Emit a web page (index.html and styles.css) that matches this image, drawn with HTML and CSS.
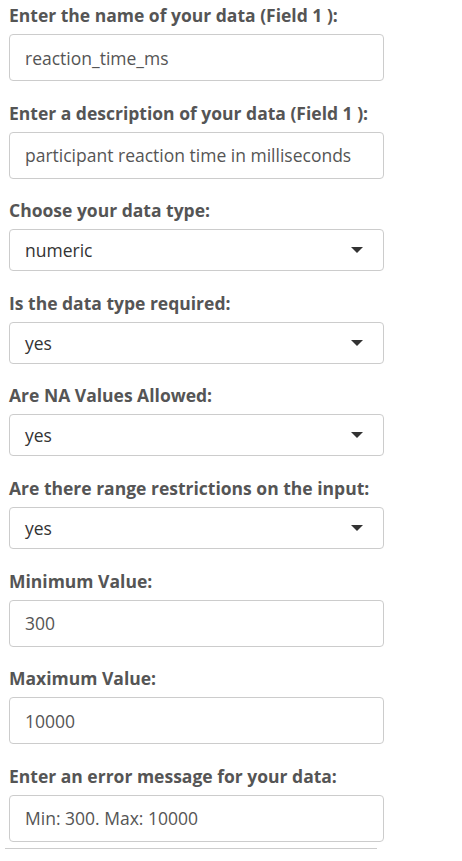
FILE: index.html
```html
<!DOCTYPE html>
<html>
<head>
<meta charset="utf-8">
<link rel="stylesheet" href="styles.css">
</head>
<body>
<div class="form">
  <div class="group text">
    <label class="lbl">Enter the name of your data (Field 1 ):</label>
    <div class="input">reaction_time_ms</div>
  </div>
  <div class="group text">
    <label class="lbl">Enter a description of your data (Field 1 ):</label>
    <div class="input">participant reaction time in milliseconds</div>
  </div>
  <div class="group sel">
    <label class="lbl">Choose your data type:</label>
    <div class="select"><span>numeric</span><span class="caret"></span></div>
  </div>
  <div class="group sel">
    <label class="lbl">Is the data type required:</label>
    <div class="select"><span>yes</span><span class="caret"></span></div>
  </div>
  <div class="group sel">
    <label class="lbl">Are NA Values Allowed:</label>
    <div class="select"><span>yes</span><span class="caret"></span></div>
  </div>
  <div class="group sel">
    <label class="lbl">Are there range restrictions on the input:</label>
    <div class="select"><span>yes</span><span class="caret"></span></div>
  </div>
  <div class="group text">
    <label class="lbl">Minimum Value:</label>
    <div class="input">300</div>
  </div>
  <div class="group text">
    <label class="lbl">Maximum Value:</label>
    <div class="input">10000</div>
  </div>
  <div class="group text last">
    <label class="lbl">Enter an error message for your data:</label>
    <div class="input">Min: 300. Max: 10000</div>
  </div>
  <div class="rule"></div>
</div>
</body>
</html>
```
FILE: styles.css
```css
html, body {
  margin: 0;
  padding: 0;
  background: #fff;
}
body {
  font-family: "Open Sans", "Liberation Sans", sans-serif;
  font-size: 17.5px;
  color: #555;
}
.form {
  padding: 4px 0 0 9px;
  width: 375px;
}
.group {
  display: flex;
  flex-direction: column;
}
.lbl {
  display: block;
  font-weight: 700;
  font-size: 17.5px;
  line-height: 22px;
  color: #555;
  margin-bottom: 8px;
}
.input {
  box-sizing: border-box;
  height: 47px;
  border: 1px solid #ccc;
  border-radius: 4px;
  padding: 0 15px;
  display: flex;
  align-items: center;
  font-size: 17.5px;
  color: #555;
}
.text {
  margin-bottom: 20.6px;
}
.sel {
  margin-bottom: 20.6px;
}
.select {
  box-sizing: border-box;
  height: 42px;
  border: 1px solid #ccc;
  border-radius: 4px;
  padding: 0 15px;
  display: flex;
  align-items: center;
  justify-content: space-between;
  font-size: 17.5px;
  color: #333;
}
.caret {
  width: 0;
  height: 0;
  border-left: 6px solid transparent;
  border-right: 6px solid transparent;
  border-top: 6px solid #333;
  margin-right: 5px;
}
.last {
  margin-bottom: 6px;
}
.rule {
  margin-left: -4px;
  width: 372px;
  border-top: 1px solid #ccc;
}
```
